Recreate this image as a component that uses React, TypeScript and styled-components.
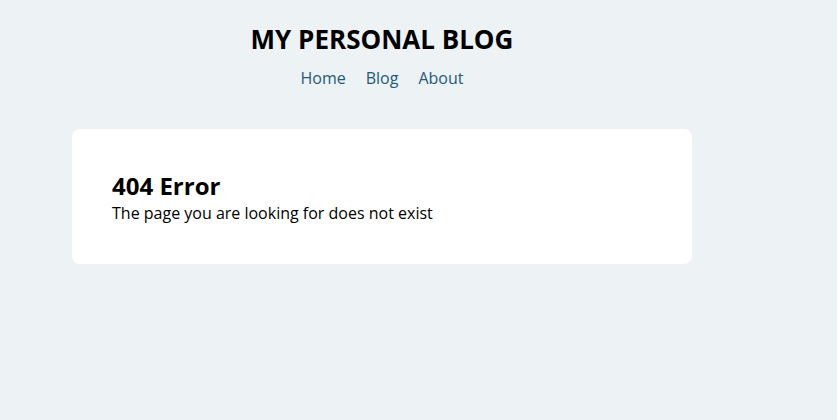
import React from "react";
import styled, { createGlobalStyle } from "styled-components";

const Global = createGlobalStyle`
  html, body { margin: 0; padding: 0; background: #edf2f5; }
  body { font-family: "Open Sans", "Noto Sans", sans-serif; color: #000; }
`;

const Page = styled.div`
  width: 620px;
  margin-left: 72px;
  padding-top: 21px;
`;

const Header = styled.header`
  display: flex;
  flex-direction: column;
  align-items: center;
`;

const Title = styled.h1`
  margin: 0;
  font-size: 26px;
  font-weight: 700;
  line-height: 36px;
`;

const Nav = styled.nav`
  display: flex;
  gap: 20px;
  margin-top: 10px;
`;

const NavLink = styled.a`
  font-size: 16px;
  line-height: 22px;
  color: #245a7a;
  text-decoration: none;
`;

const Card = styled.main`
  margin-top: 40px;
  background: #fff;
  border-radius: 8px;
  padding: 41px 40px 40px;
  height: 135px;
  box-sizing: border-box;
`;

const Heading = styled.h2`
  margin: 0;
  font-size: 24px;
  font-weight: 700;
  line-height: 32px;
`;

const Text = styled.p`
  margin: 0;
  font-size: 16px;
  line-height: 22px;
`;

export default function App() {
  return (
    <>
      <Global />
      <Page>
        <Header>
          <Title>MY PERSONAL BLOG</Title>
          <Nav>
            <NavLink href="#">Home</NavLink>
            <NavLink href="#">Blog</NavLink>
            <NavLink href="#">About</NavLink>
          </Nav>
        </Header>
        <Card>
          <Heading>404 Error</Heading>
          <Text>The page you are looking for does not exist</Text>
        </Card>
      </Page>
    </>
  );
}
